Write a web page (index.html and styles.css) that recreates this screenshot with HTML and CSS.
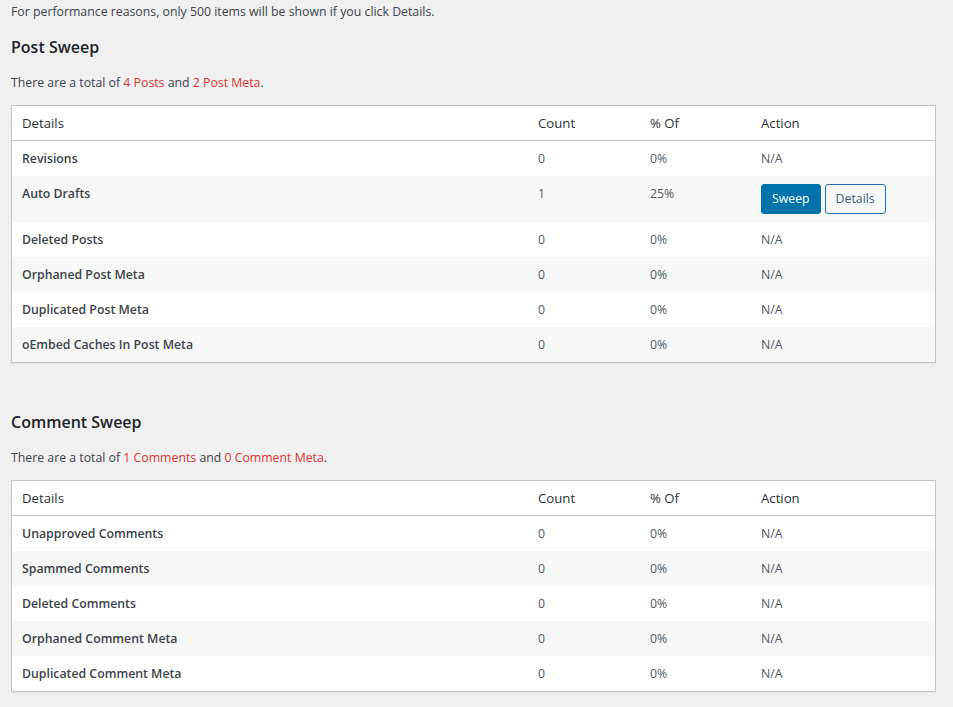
FILE: index.html
```html
<!DOCTYPE html>
<html>
<head>
<meta charset="utf-8">
<link rel="stylesheet" href="styles.css">
</head>
<body>
<div class="wrap">
  <p class="note">For performance reasons, only 500 items will be shown if you click Details.</p>

  <h2 class="section-title">Post Sweep</h2>
  <p class="total">There are a total of <span class="hl">4 Posts</span> and <span class="hl">2 Post Meta</span>.</p>
  <table class="sweep-table">
    <thead>
      <tr><th class="c-details">Details</th><th class="c-count">Count</th><th class="c-pct">% Of</th><th class="c-action">Action</th></tr>
    </thead>
    <tbody>
      <tr><td class="label">Revisions</td><td>0</td><td>0%</td><td class="na">N/A</td></tr>
      <tr><td class="label">Auto Drafts</td><td>1</td><td>25%</td><td><div class="actions"><button class="btn btn-primary">Sweep</button><button class="btn btn-secondary">Details</button></div></td></tr>
      <tr><td class="label">Deleted Posts</td><td>0</td><td>0%</td><td class="na">N/A</td></tr>
      <tr><td class="label">Orphaned Post Meta</td><td>0</td><td>0%</td><td class="na">N/A</td></tr>
      <tr><td class="label">Duplicated Post Meta</td><td>0</td><td>0%</td><td class="na">N/A</td></tr>
      <tr><td class="label">oEmbed Caches In Post Meta</td><td>0</td><td>0%</td><td class="na">N/A</td></tr>
    </tbody>
  </table>

  <h2 class="section-title second">Comment Sweep</h2>
  <p class="total">There are a total of <span class="hl">1 Comments</span> and <span class="hl">0 Comment Meta</span>.</p>
  <table class="sweep-table">
    <thead>
      <tr><th class="c-details">Details</th><th class="c-count">Count</th><th class="c-pct">% Of</th><th class="c-action">Action</th></tr>
    </thead>
    <tbody>
      <tr><td class="label">Unapproved Comments</td><td>0</td><td>0%</td><td class="na">N/A</td></tr>
      <tr><td class="label">Spammed Comments</td><td>0</td><td>0%</td><td class="na">N/A</td></tr>
      <tr><td class="label">Deleted Comments</td><td>0</td><td>0%</td><td class="na">N/A</td></tr>
      <tr><td class="label">Orphaned Comment Meta</td><td>0</td><td>0%</td><td class="na">N/A</td></tr>
      <tr><td class="label">Duplicated Comment Meta</td><td>0</td><td>0%</td><td class="na">N/A</td></tr>
    </tbody>
  </table>
</div>
</body>
</html>
```
FILE: styles.css
```css
html, body {
  margin: 0;
  padding: 0;
  background: #f0f0f1;
}
body {
  font-family: "Open Sans", "Noto Sans", sans-serif;
  font-size: 12.3px;
  line-height: 19px;
  color: #3c434a;
}
.wrap {
  padding: 2px 17px 20px 11px;
}
p {
  margin: 0;
}
.note {
  margin-bottom: 14px;
}
.section-title {
  margin: 0 0 14px;
  font-size: 16px;
  line-height: 24px;
  font-weight: 600;
  color: #1d2327;
}
.section-title.second {
  margin-top: 47px;
}
.total {
  margin-bottom: 13px;
}
.hl {
  color: #dc3232;
}
.sweep-table {
  width: 100%;
  border-collapse: separate;
  border-spacing: 0;
  border: 1px solid #c3c4c7;
  background: #fff;
  box-shadow: 0 1px 1px rgba(0,0,0,0.04);
}
.sweep-table th {
  text-align: left;
  font-weight: 400;
  font-size: 13.2px;
  line-height: 18px;
  color: #2c3338;
  padding: 8px 10px;
  border-bottom: 1px solid #c3c4c7;
}
.c-count { width: 92px; }
.c-pct { width: 91px; }
.c-action { width: 164px; }
.sweep-table td {
  padding: 8px 10px;
  vertical-align: top;
  line-height: 19px;
  color: #50575e;
}
.sweep-table tbody tr:nth-child(even) td {
  background: #f6f7f7;
}
.sweep-table td.label {
  font-weight: 600;
  color: #3c434a;
}
.actions {
  display: flex;
  gap: 4px;
}
.btn {
  font-family: inherit;
  font-size: 12.3px;
  line-height: 28px;
  height: 30px;
  padding: 0 10px;
  border-radius: 3px;
  border: 1px solid;
  cursor: pointer;
  white-space: nowrap;
  box-sizing: border-box;
}
.btn-primary {
  background: #0073aa;
  border-color: #0073aa;
  color: #fff;
}
.btn-secondary {
  background: #f6f7f7;
  border-color: #2271b1;
  color: #3b5d7a;
}
```
